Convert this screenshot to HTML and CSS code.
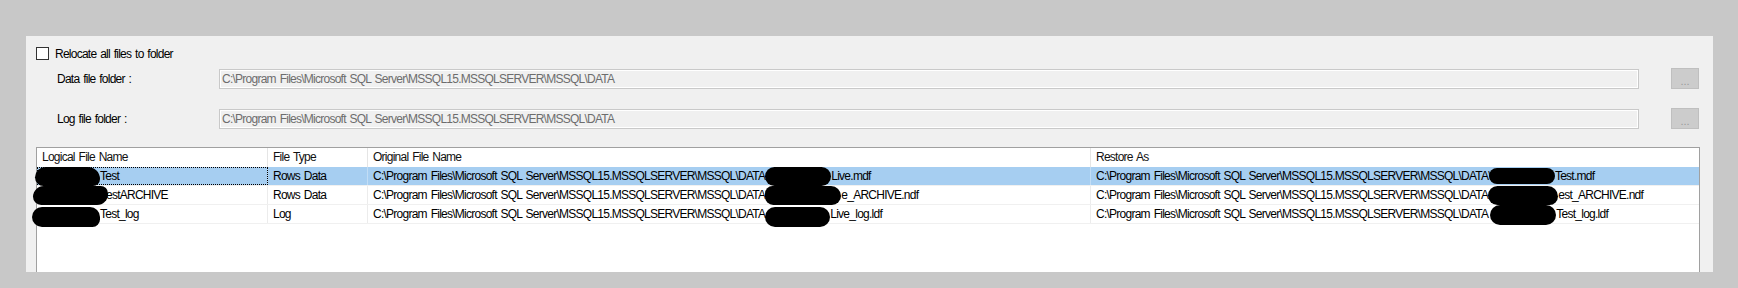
FILE: index.html
```html
<!DOCTYPE html>
<html lang="en">
<head>
    <meta charset="UTF-8">
    <title>Restore Database - Files</title>
    <link rel="stylesheet" href="styles.css">
</head>
<body>
    <div class="window">
        <div class="panel">
            <label class="check-row">
                <span class="checkbox"></span>
                Relocate all files to folder
            </label>

            <div class="field-row first">
                <span class="field-label">Data file folder :</span>
                <div class="textbox">C:\Program Files\Microsoft SQL Server\MSSQL15.MSSQLSERVER\MSSQL\DATA</div>
                <button class="browse" disabled>...</button>
            </div>
            <div class="field-row">
                <span class="field-label">Log file folder :</span>
                <div class="textbox">C:\Program Files\Microsoft SQL Server\MSSQL15.MSSQLSERVER\MSSQL\DATA</div>
                <button class="browse" disabled>...</button>
            </div>

            <div class="list">
                <div class="list-row list-head">
                    <div class="cell">Logical File Name</div>
                    <div class="cell">File Type</div>
                    <div class="cell">Original File Name</div>
                    <div class="cell">Restore As</div>
                </div>
                <div class="list-row selected">
                    <div class="cell focus"><span class="blob b1"></span>Test</div>
                    <div class="cell">Rows Data</div>
                    <div class="cell">C:\Program Files\Microsoft SQL Server\MSSQL15.MSSQLSERVER\MSSQL\DATA<span class="blob b4"></span>Live.mdf</div>
                    <div class="cell">C:\Program Files\Microsoft SQL Server\MSSQL15.MSSQLSERVER\MSSQL\DATA\<span class="blob b7"></span>Test.mdf</div>
                </div>
                <div class="list-row">
                    <div class="cell"><span class="blob b2"></span>estARCHIVE</div>
                    <div class="cell">Rows Data</div>
                    <div class="cell">C:\Program Files\Microsoft SQL Server\MSSQL15.MSSQLSERVER\MSSQL\DATA<span class="blob b5"></span>e_ARCHIVE.ndf</div>
                    <div class="cell">C:\Program Files\Microsoft SQL Server\MSSQL15.MSSQLSERVER\MSSQL\DATA<span class="blob b8"></span>est_ARCHIVE.ndf</div>
                </div>
                <div class="list-row">
                    <div class="cell"><span class="blob b3"></span>Test_log</div>
                    <div class="cell">Log</div>
                    <div class="cell">C:\Program Files\Microsoft SQL Server\MSSQL15.MSSQLSERVER\MSSQL\DATA<span class="blob b6"></span>Live_log.ldf</div>
                    <div class="cell">C:\Program Files\Microsoft SQL Server\MSSQL15.MSSQLSERVER\MSSQL\DATA<span class="blob b9"></span>Test_log.ldf</div>
                </div>
            </div>
        </div>
    </div>
</body>
</html>
```

FILE: styles.css
```css
body {
    margin: 0;
    height: 288px;
    background-color: #c8c8c8;
    font-family: "Liberation Sans", Arial, sans-serif;
    font-size: 12px;
    letter-spacing: -0.75px;
    word-spacing: 1.2px;
    color: #000;
}
.window {
    padding: 36px 0 0 26px;
}
.panel {
    width: 1687px;
    height: 236px;
    box-sizing: border-box;
    padding: 11px 0 0 10px;
    background-color: #f0f0f0;
    overflow: hidden;
}
.check-row {
    display: flex;
    align-items: center;
    gap: 6px;
    height: 13px;
}
.checkbox {
    width: 13px;
    height: 13px;
    box-sizing: border-box;
    border: 1px solid #333;
    background-color: #fff;
}
.field-row {
    display: flex;
    align-items: center;
    height: 21px;
    margin-top: 19px;
}
.field-row.first {
    margin-top: 8px;
}
.field-label {
    width: 162px;
    padding-left: 21px;
}
.textbox {
    width: 1420px;
    height: 20px;
    line-height: 18px;
    box-sizing: border-box;
    padding-left: 2px;
    margin-top: 1px;
    border: 1px solid #c9c9c9;
    box-shadow: inset 0 0 0 1px #fff;
    color: #6d6d6d;
    white-space: nowrap;
}
.browse {
    width: 28px;
    height: 21px;
    margin-left: 32px;
    padding: 5px 0 0;
    border: 1px solid #bfbfbf;
    background-color: #cccccc;
    color: #9a9a9a;
    font-family: "Liberation Sans", Arial, sans-serif;
    font-size: 11px;
    letter-spacing: 0;
}
.list {
    width: 1664px;
    height: 140px;
    margin-top: 18px;
    box-sizing: border-box;
    border: 1px solid #a0a0a0;
    background-color: #fff;
}
.list-row {
    display: grid;
    grid-template-columns: 231px 100px 723px 1fr;
    height: 19px;
    box-sizing: border-box;
    border-bottom: 1px solid #f0f0f0;
}
.list-head {
    border-bottom: none;
    color: #111;
}
.cell {
    padding-left: 5px;
    border-right: 1px solid #ececec;
    line-height: 18px;
    white-space: nowrap;
}
.list-head .cell {
    line-height: 19px;
    border-right-color: #e5e5e5;
}
.list-row .cell:last-child {
    border-right: none;
}
.selected {
    background-color: #a6cef1;
}
.selected .cell {
    border-right-color: #c2ddf5;
}
.cell.focus {
    outline: 1px dotted #000;
    outline-offset: -1px;
}
.blob {
    display: inline-block;
    height: 19px;
    margin-top: -6px;
    margin-bottom: -6px;
    vertical-align: middle;
    border-radius: 10px;
    background-color: #000;
    position: relative;
}
.b1 { width: 65px; margin-left: -7px; top: 0; border-radius: 12px 14px 8px 10px; }
.b2 { width: 75px; margin-left: -9px; margin-right: -2px; top: 0; border-radius: 12px 8px 12px 9px; }
.b3 { width: 68px; margin-left: -10px; top: 2px; height: 20px; border-radius: 12px 12px 9px 12px; }
.b4 { width: 66px; top: 0; border-radius: 11px; }
.b5 { width: 76px; top: 0; border-radius: 9px 12px 11px 10px; }
.b6 { width: 65px; top: 2px; height: 20px; border-radius: 10px; }
.b7 { width: 66px; margin-left: -2px; top: -1px; height: 16px; border-radius: 9px; }
.b8 { width: 70px; top: 0; border-radius: 10px 11px 9px 10px; }
.b9 { width: 66px; margin-left: 2px; top: 0; height: 20px; border-radius: 10px; }
```
